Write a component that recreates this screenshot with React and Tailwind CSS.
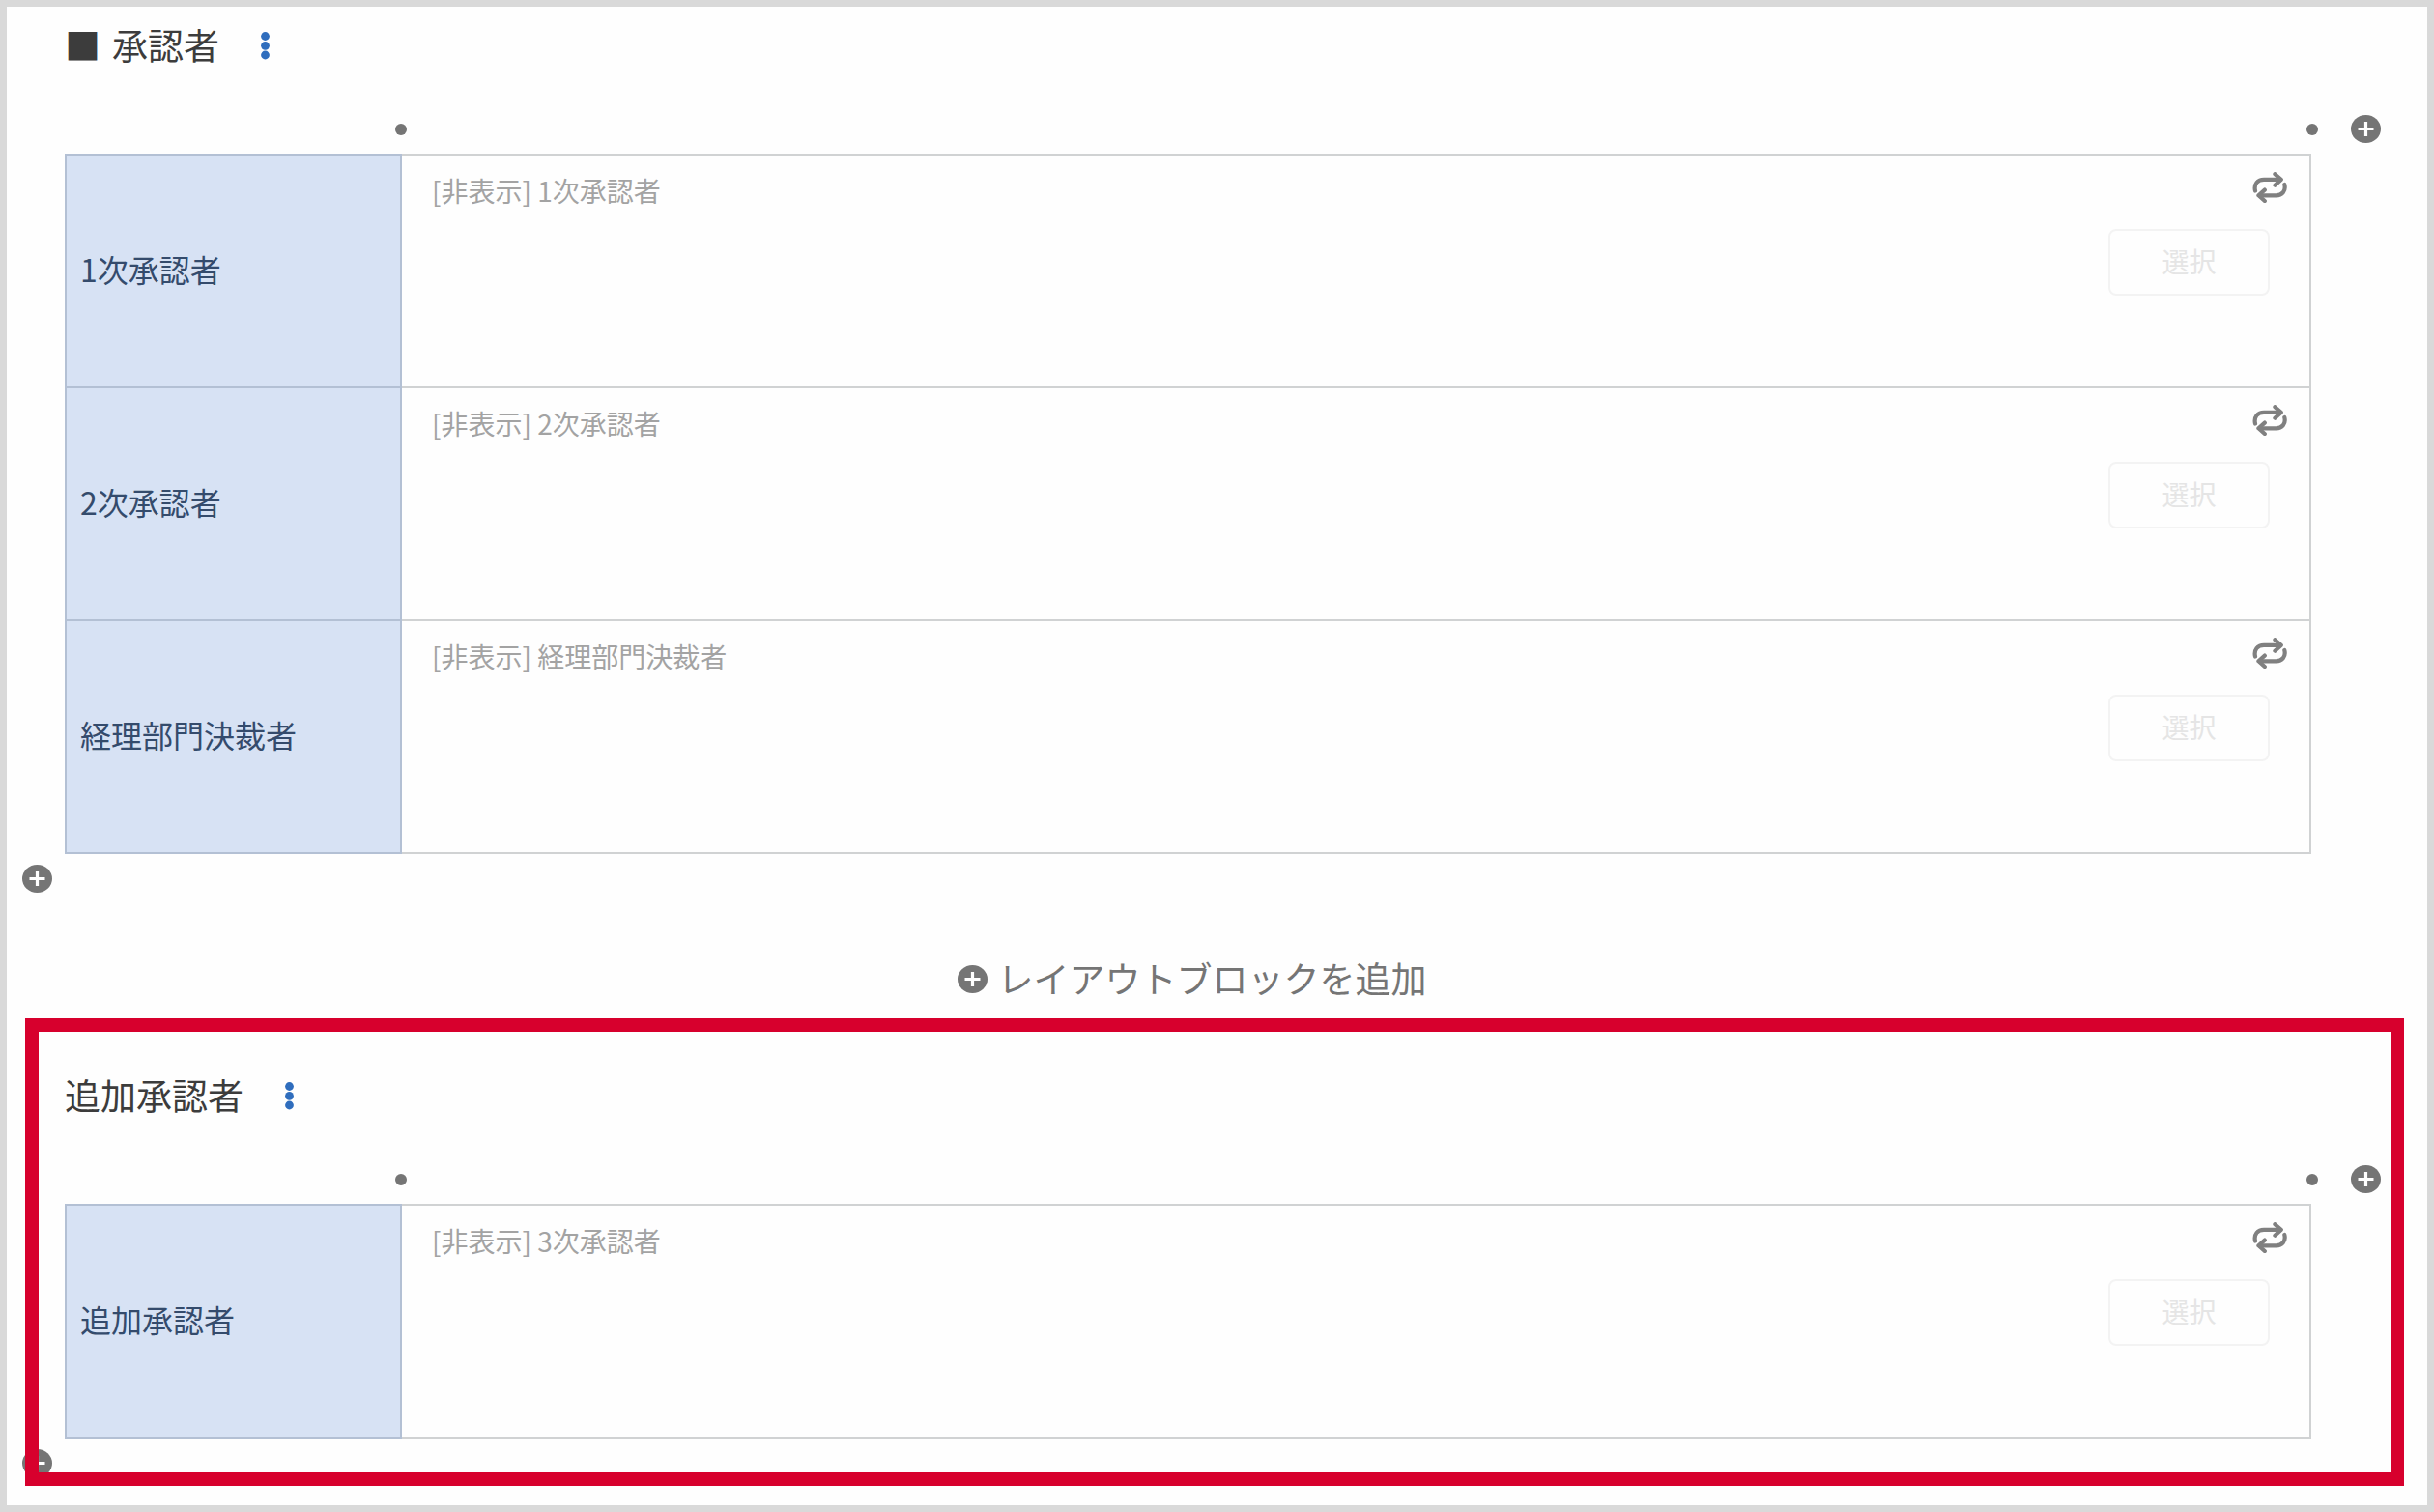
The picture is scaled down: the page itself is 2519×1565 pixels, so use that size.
import { useState } from "react";

const initialBlocks = [
  {
    id: "approvers",
    mark: "■",
    title: "承認者",
    highlighted: false,
    rows: [
      { label: "1次承認者", field: "1次承認者" },
      { label: "2次承認者", field: "2次承認者" },
      { label: "経理部門決裁者", field: "経理部門決裁者" },
    ],
  },
  {
    id: "extra-approvers",
    mark: "",
    title: "追加承認者",
    highlighted: true,
    rows: [{ label: "追加承認者", field: "3次承認者" }],
  },
];

function PlusIcon() {
  return (
    <svg width="31" height="29" viewBox="0 0 31 29" aria-hidden="true">
      <ellipse cx="15.5" cy="14.5" rx="15.5" ry="14.5" fill="#757575" />
      <path d="M7.5 14.5h16M15.5 7v15" stroke="#fff" strokeWidth="3.2" />
    </svg>
  );
}

function RepeatIcon() {
  return (
    <svg
      width="36"
      height="32"
      viewBox="0 0 36 32"
      fill="none"
      stroke="#808080"
      strokeWidth="4.2"
      strokeLinecap="round"
      strokeLinejoin="round"
      aria-hidden="true"
    >
      <path d="M3 19.5C1.4 12.5 5.5 7.8 12 7.8H28.5" />
      <path d="M23.4 2.2L29.8 7.9L23.4 13.7" />
      <path d="M33.3 13C35 19.6 30.8 24.4 24.5 24.4H7.5" />
      <path d="M12.8 18.6L6.4 24.3L12.8 30" />
    </svg>
  );
}

function MenuDots() {
  return (
    <svg width="9" height="29" viewBox="0 0 9 29" fill="#2f6dbd" aria-hidden="true">
      <circle cx="4.5" cy="4.5" r="4.4" />
      <circle cx="4.5" cy="14.3" r="4.4" />
      <circle cx="4.5" cy="24" r="4.4" />
    </svg>
  );
}

function LayoutBlock({ block, onAddRow }) {
  return (
    <section aria-labelledby={block.id} className="pt-5">
      {/* Title */}
      <div className="flex h-10 items-center pl-[60px]">
        <h2
          id={block.id}
          className="flex gap-3 pb-0.5 text-[37px] leading-10 text-[#3c3c3c]"
        >
          {block.mark && <span>{block.mark}</span>}
          <span>{block.title}</span>
        </h2>
        <button type="button" aria-label="メニュー" className="ml-[43px]">
          <MenuDots />
        </button>
      </div>

      {/* Column handles */}
      <div className="mt-[52px] flex items-center justify-between pr-12 pl-[402px]">
        <span className="h-3 w-3 rounded-full bg-[#757575]" />
        <div className="flex items-center gap-[34px]">
          <span className="h-3 w-3 rounded-full bg-[#757575]" />
          <button type="button" aria-label="列を追加">
            <PlusIcon />
          </button>
        </div>
      </div>

      {/* Fields */}
      <div className="mt-[11px] pr-[120px] pl-[60px]">
        <table className="w-full table-fixed border-collapse">
          <tbody>
            {block.rows.map((row, index) => (
              <tr key={index} className="h-[241px]">
                <th
                  scope="row"
                  className="w-[347px] border-2 border-[#b3c0d4] bg-[#d7e2f4] pb-1.5 pl-3.5 text-left align-middle text-[32px] leading-10 font-normal text-[#344b6c]"
                >
                  {row.label}
                </th>
                <td className="border-2 border-[#d0d2d3] pt-[17px] pr-[23px] pl-[31px] align-top">
                  <div className="flex items-start justify-between">
                    <span className="text-[28px] leading-[38px] text-[#a3a3a3]">
                      [非表示] {row.field}
                    </span>
                    <button type="button" aria-label="繰り返し">
                      <RepeatIcon />
                    </button>
                  </div>
                  <div className="mt-[21px] flex justify-end pr-[18px]">
                    <button
                      type="button"
                      disabled
                      className="h-[69px] w-[167px] rounded-lg border-2 border-[#f3f3f3] pb-1 text-[28px] text-[#e5e5e5]"
                    >
                      選択
                    </button>
                  </div>
                </td>
              </tr>
            ))}
          </tbody>
        </table>
      </div>

      {/* Add row */}
      <div className="mt-[11px] flex pl-4">
        <button
          type="button"
          aria-label="行を追加"
          onClick={() => onAddRow(block.id)}
        >
          <PlusIcon />
        </button>
      </div>
    </section>
  );
}

export default function App() {
  const [blocks, setBlocks] = useState(initialBlocks);

  const handleAddRow = (id) => {
    setBlocks((prev) =>
      prev.map((block) =>
        block.id === id
          ? { ...block, rows: [...block.rows, { label: "", field: "" }] }
          : block
      )
    );
  };

  return (
    <main className="min-h-screen border-[7px] border-[#d9d9d9] bg-[#fefefe] font-['Noto_Sans_CJK_JP',sans-serif]">
      {blocks.map((block, index) => (
        <div key={block.id}>
          {index > 0 && (
            <div className="flex justify-center pt-[69px] pr-[52px] pb-[21px]">
              <button
                type="button"
                className="flex h-10 items-center gap-[11px] text-[37px] leading-10 text-[#757575]"
              >
                <PlusIcon />
                <span className="pb-0.5">レイアウトブロックを追加</span>
              </button>
            </div>
          )}

          {block.highlighted ? (
            <div className="relative pt-10 pb-[9px]">
              <LayoutBlock block={block} onAddRow={handleAddRow} />
              {/* Highlight frame */}
              <div className="pointer-events-none absolute inset-y-0 right-6 left-[19px] border-[14px] border-[#d7002d]" />
            </div>
          ) : (
            <LayoutBlock block={block} onAddRow={handleAddRow} />
          )}
        </div>
      ))}
    </main>
  );
}
